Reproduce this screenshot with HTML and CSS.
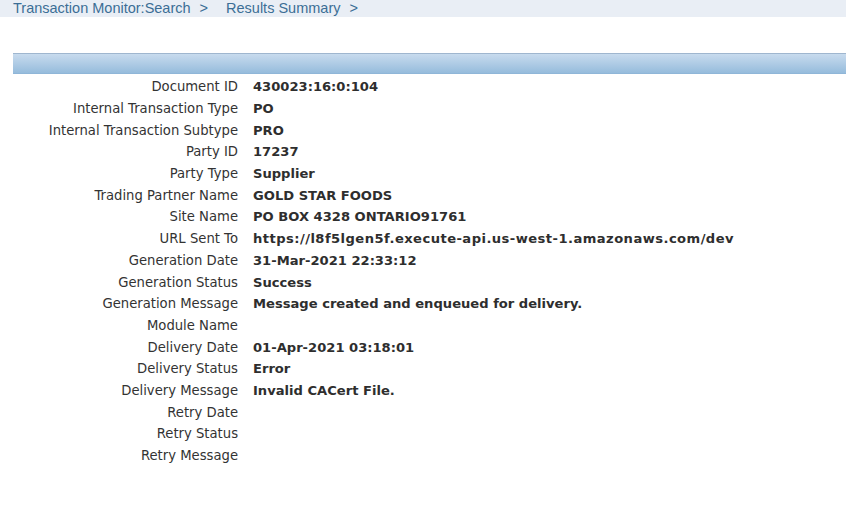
FILE: index.html
```html
<!DOCTYPE html>
<html>
<head>
<meta charset="utf-8">
<link rel="stylesheet" href="styles.css">
</head>
<body>
<div class="crumbs">
  <a class="crumb">Transaction Monitor:Search</a><span class="sep">&gt;</span>
  <a class="crumb">Results Summary</a><span class="sep">&gt;</span>
</div>
<div class="header-bar"></div>
<div class="details">
  <div class="label">Document ID</div><div class="value">430023:16:0:104</div>
  <div class="label">Internal Transaction Type</div><div class="value">PO</div>
  <div class="label">Internal Transaction Subtype</div><div class="value">PRO</div>
  <div class="label">Party ID</div><div class="value">17237</div>
  <div class="label">Party Type</div><div class="value">Supplier</div>
  <div class="label">Trading Partner Name</div><div class="value">GOLD STAR FOODS</div>
  <div class="label">Site Name</div><div class="value">PO BOX 4328 ONTARIO91761</div>
  <div class="label">URL Sent To</div><div class="value url">https://l8f5lgen5f.execute-api.us-west-1.amazonaws.com/dev</div>
  <div class="label">Generation Date</div><div class="value">31-Mar-2021 22:33:12</div>
  <div class="label">Generation Status</div><div class="value">Success</div>
  <div class="label">Generation Message</div><div class="value">Message created and enqueued for delivery.</div>
  <div class="label">Module Name</div><div class="value"></div>
  <div class="label">Delivery Date</div><div class="value">01-Apr-2021 03:18:01</div>
  <div class="label">Delivery Status</div><div class="value">Error</div>
  <div class="label">Delivery Message</div><div class="value">Invalid CACert File.</div>
  <div class="label">Retry Date</div><div class="value"></div>
  <div class="label">Retry Status</div><div class="value"></div>
  <div class="label">Retry Message</div><div class="value"></div>
</div>
</body>
</html>
```
FILE: styles.css
```css
html, body {
  margin: 0;
  padding: 0;
  background: #ffffff;
}
.crumbs {
  height: 17px;
  background: #e9eef5;
  padding-left: 13px;
  display: flex;
  align-items: center;
  font-family: "Liberation Sans", Arial, sans-serif;
  font-size: 14.5px;
  color: #3c6e96;
  line-height: 17px;
}
.crumb {
  color: #3c6e96;
}
.sep {
  margin: 0 18px 0 9px;
}
.header-bar {
  margin: 36px 0 0 13px;
  height: 19px;
  border-top: 1px solid #9fb6cf;
  border-bottom: 1px solid #8fb6d8;
  background: linear-gradient(#c8dbee, #96bcdc);
}
.details {
  display: grid;
  grid-template-columns: 238px auto;
  column-gap: 15px;
  grid-auto-rows: 21.7px;
  margin-top: 2px;
  font-family: "DejaVu Sans", sans-serif;
  font-size: 13.2px;
  color: #333333;
  align-items: center;
}
.label {
  text-align: right;
  white-space: nowrap;
}
.value {
  font-weight: bold;
  font-size: 13.1px;
  color: #2e2e2e;
  white-space: nowrap;
}
.url {
  letter-spacing: 0.45px;
}
```
